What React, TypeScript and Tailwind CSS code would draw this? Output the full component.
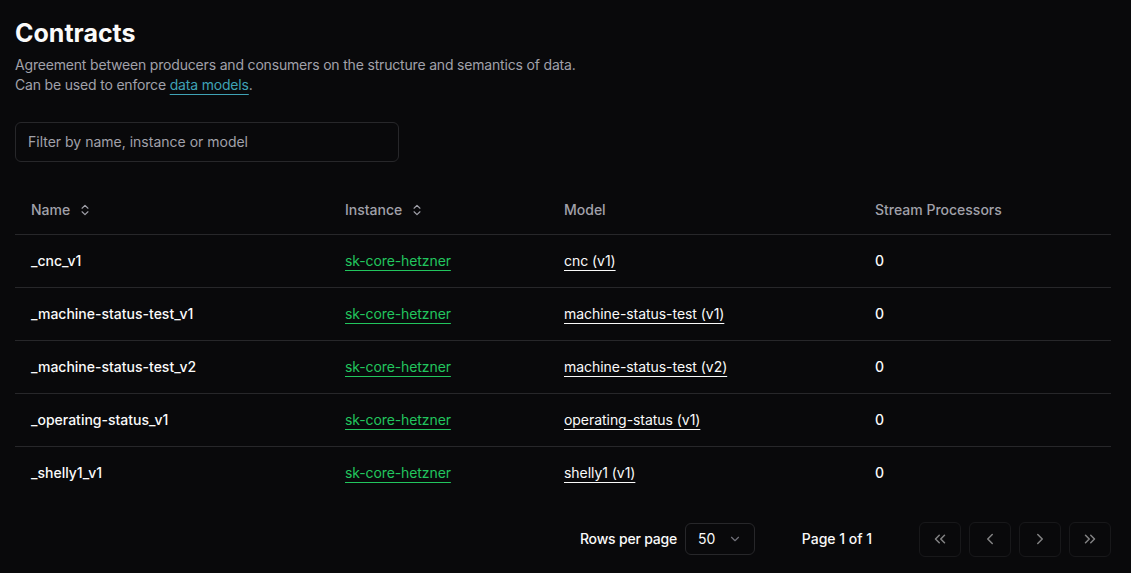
import React from "react";

const rows = [
  { name: "_cnc_v1", model: "cnc (v1)" },
  { name: "_machine-status-test_v1", model: "machine-status-test (v1)" },
  { name: "_machine-status-test_v2", model: "machine-status-test (v2)" },
  { name: "_operating-status_v1", model: "operating-status (v1)" },
  { name: "_shelly1_v1", model: "shelly1 (v1)" },
];

function SortIcon() {
  return (
    <svg width="14" height="14" viewBox="0 0 24 24" fill="none" stroke="currentColor" strokeWidth="2" strokeLinecap="round" strokeLinejoin="round" className="ml-2">
      <path d="m7 15 5 5 5-5" />
      <path d="m7 9 5-5 5 5" />
    </svg>
  );
}

function Chev({ d }: { d: string[] }) {
  return (
    <svg width="18" height="18" viewBox="0 0 24 24" fill="none" stroke="currentColor" strokeWidth="2" strokeLinecap="round" strokeLinejoin="round">
      {d.map((p, i) => (
        <path key={i} d={p} />
      ))}
    </svg>
  );
}

export default function App() {
  return (
    <div className="min-h-[573px] bg-[#09090b] text-[#fafafa] pl-[15px] pr-[20px] pt-[17px]" style={{ fontFamily: "Inter, 'Noto Sans', sans-serif" }}>
      <h1 className="text-[25px] font-bold leading-8">Contracts</h1>
      <p className="mt-[6px] text-sm leading-5 text-[#a1a1aa] tracking-[-0.18px]">
        Agreement between producers and consumers on the structure and semantics of data.
        <br />
        Can be used to enforce{" "}
        <span className="text-[#3fa2b6] underline underline-offset-4 decoration-[#3fa2b6]">data models</span>.
      </p>
      <div className="mt-[27px] w-[384px] h-10 rounded-md border border-[#27272a] bg-transparent flex items-center px-3 text-sm text-[#a1a1aa]">
        Filter by name, instance or model
      </div>
      <table className="mt-[24px] w-full table-fixed text-sm border-collapse">
        <colgroup>
          <col className="w-[314px]" />
          <col className="w-[219px]" />
          <col className="w-[311px]" />
          <col />
        </colgroup>
        <thead>
          <tr className="border-b border-[#27272a]">
            <th className="h-12 px-4 text-left font-medium text-[#a1a1aa]">
              <span className="inline-flex items-center">Name<SortIcon /></span>
            </th>
            <th className="h-12 px-4 text-left font-medium text-[#a1a1aa]">
              <span className="inline-flex items-center">Instance<SortIcon /></span>
            </th>
            <th className="h-12 px-4 text-left font-medium text-[#a1a1aa]">Model</th>
            <th className="h-12 px-4 text-left font-medium text-[#a1a1aa]">Stream Processors</th>
          </tr>
        </thead>
        <tbody>
          {rows.map((r, i) => (
            <tr key={r.name} className={i < rows.length - 1 ? "border-b border-[#27272a]" : ""}>
              <td className="px-4 py-4 leading-5 font-medium">{r.name}</td>
              <td className="px-4 py-4 leading-5">
                <span className="text-[#22c55e] underline underline-offset-4 decoration-[#22c55e] tracking-[-0.1px]">sk-core-hetzner</span>
              </td>
              <td className="px-4 py-4 leading-5">
                <span className="underline underline-offset-4 tracking-[-0.05px]">{r.model}</span>
              </td>
              <td className="px-4 py-4 leading-5 font-medium">0</td>
            </tr>
          ))}
        </tbody>
      </table>
      <div className="mt-[23px] flex items-center justify-end gap-8">
        <div className="flex items-center gap-2">
          <span className="text-sm font-medium tracking-[-0.2px]">Rows per page</span>
          <div className="h-8 w-[70px] rounded-md border border-[#27272a] flex items-center justify-between pl-3 pr-[12px] text-sm">
            <span>50</span>
            <svg width="14" height="14" viewBox="0 0 24 24" fill="none" stroke="#71717a" strokeWidth="2" strokeLinecap="round" strokeLinejoin="round">
              <path d="m6 9 6 6 6-6" />
            </svg>
          </div>
        </div>
        <div className="w-[100px] flex justify-center text-sm font-medium">Page 1 of 1</div>
        <div className="flex items-center gap-2">
          {[
            ["m11 17-5-5 5-5", "m18 17-5-5 5-5"],
            ["m15 18-6-6 6-6"],
            ["m9 18 6-6-6-6"],
            ["m6 17 5-5-5-5", "m13 17 5-5-5-5"],
          ].map((d, i) => (
            <div key={i} className="h-[35px] w-[42px] rounded-md border border-[#27272a] flex items-center justify-center text-[#fafafa] opacity-50">
              <Chev d={d} />
            </div>
          ))}
        </div>
      </div>
    </div>
  );
}
